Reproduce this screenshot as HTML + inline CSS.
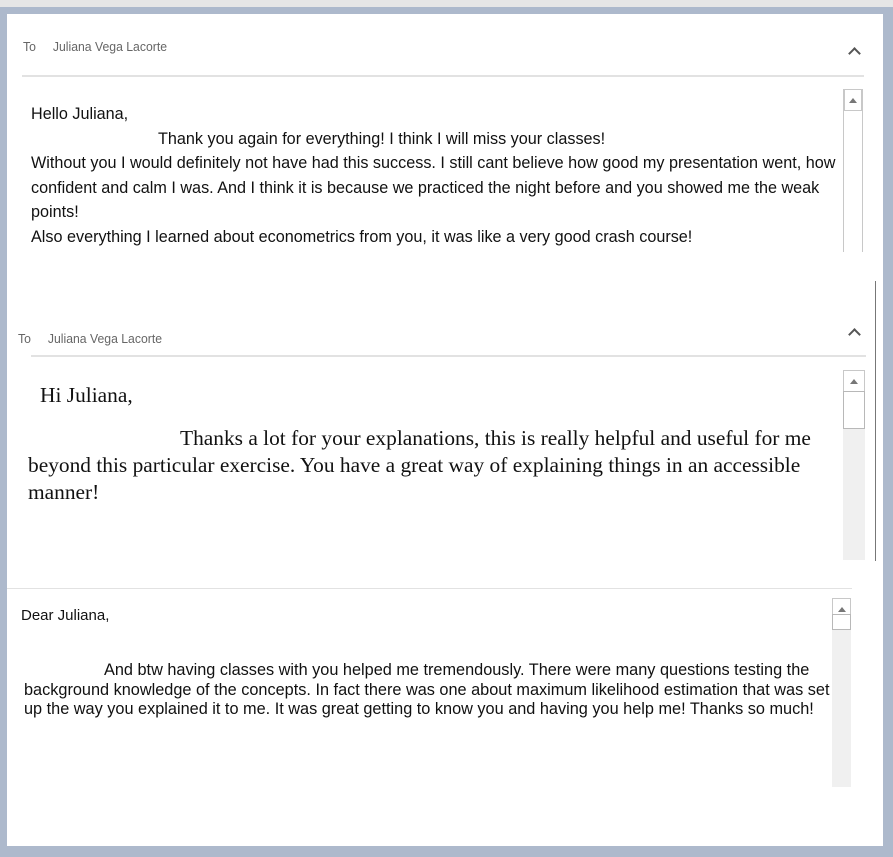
<!DOCTYPE html>
<html><head><meta charset="utf-8"><style>
*{margin:0;padding:0;box-sizing:border-box}
body{width:893px;height:857px;position:relative;background:#fff;overflow:hidden;font-family:"Liberation Sans",sans-serif}
.a{position:absolute;white-space:nowrap}
.hdr{font-size:13px;color:#666;transform:scaleX(.94);transform-origin:left top}
.chev{position:absolute;width:9px;height:9px;border-left:2px solid #555;border-top:2px solid #555;transform:rotate(45deg)}
.sb{position:absolute;background:#f0f0f0}
.sb .up{position:absolute;left:0;top:0;right:0;height:22px;border:1px solid #c8c8c8;background:#fff}
.sb .up:after{content:"";position:absolute;left:50%;top:8px;margin-left:-4px;border-left:4px solid transparent;border-right:4px solid transparent;border-bottom:5px solid #777}
.sb .th{position:absolute;left:0;right:0;border:1px solid #b8b8b8;background:#fff}
.c1{font-size:16.2px;line-height:24.5px;color:#111}
.c2{font-family:"Liberation Serif",serif;font-size:21.4px;line-height:27px;color:#111}
.c3{font-size:16.3px;line-height:19.5px;color:#111;transform:scaleX(1.0);transform-origin:left top}
</style></head><body>
<div class="a" style="left:0;top:0;width:893px;height:7px;background:#e6e6e6"></div>
<div class="a" style="left:0;top:7px;width:893px;height:7px;background:#adb9cc"></div>
<div class="a" style="left:0;top:7px;width:7px;height:850px;background:#adb9cc"></div>
<div class="a" style="left:883px;top:7px;width:10px;height:850px;background:#adb9cc"></div>
<div class="a" style="left:0;top:846px;width:893px;height:11px;background:#adb9cc"></div>

<div class="a hdr" style="left:23px;top:39px">To&nbsp;&nbsp;&nbsp;&nbsp;&nbsp;Juliana Vega Lacorte</div>
<div class="chev" style="left:850px;top:49px"></div>
<div class="a" style="left:22px;top:75px;width:842px;height:2px;background:#e2e2e2"></div>
<div class="sb" style="left:843px;top:89px;width:20px;height:163px;background:#fff;border-left:1px solid #c8c8c8;border-right:1px solid #c8c8c8"><div class="up"></div></div>
<div class="a c1" style="left:31px;top:102px">Hello Juliana,<br><span style="display:inline-block;width:127px"></span>Thank you again for everything! I think I will miss your classes!<br>Without you I would definitely not have had this success. I still cant believe how good my presentation went, how<br>confident and calm I was. And I think it is because we practiced the night before and you showed me the weak<br>points!<br>Also everything I learned about econometrics from you, it was like a very good crash course!</div>

<div class="a" style="left:875px;top:281px;width:1px;height:280px;background:#777"></div>
<div class="a hdr" style="left:18px;top:331px">To&nbsp;&nbsp;&nbsp;&nbsp;&nbsp;Juliana Vega Lacorte</div>
<div class="chev" style="left:850px;top:330px"></div>
<div class="a" style="left:31px;top:355px;width:835px;height:2px;background:#e2e2e2"></div>
<div class="sb" style="left:843px;top:370px;width:22px;height:190px"><div class="up"></div><div class="th" style="top:21px;height:38px"></div></div>
<div class="a c2" style="left:40px;top:382px">Hi Juliana,</div>
<div class="a c2" style="left:28px;top:425px"><span style="display:inline-block;width:152px"></span>Thanks a lot for your explanations, this is really helpful and useful for me<br>beyond this particular exercise. You have a great way of explaining things in an accessible<br>manner!</div>

<div class="a" style="left:7px;top:588px;width:845px;height:1px;background:#e2e2e2"></div>
<div class="sb" style="left:832px;top:598px;width:19px;height:189px"><div class="up" style="height:17px"></div><div class="th" style="top:16px;height:16px"></div></div>
<div class="a c3" style="left:21px;top:606px;font-size:15px">Dear Juliana,</div>
<div class="a c3" style="left:24px;top:661px"><span style="display:inline-block;width:80px"></span>And btw having classes with you helped me tremendously. There were many questions testing the<br>background knowledge of the concepts. In fact there was one about maximum likelihood estimation that was set<br>up the way you explained it to me. It was great getting to know you and having you help me! Thanks so much!</div>
</body></html>
